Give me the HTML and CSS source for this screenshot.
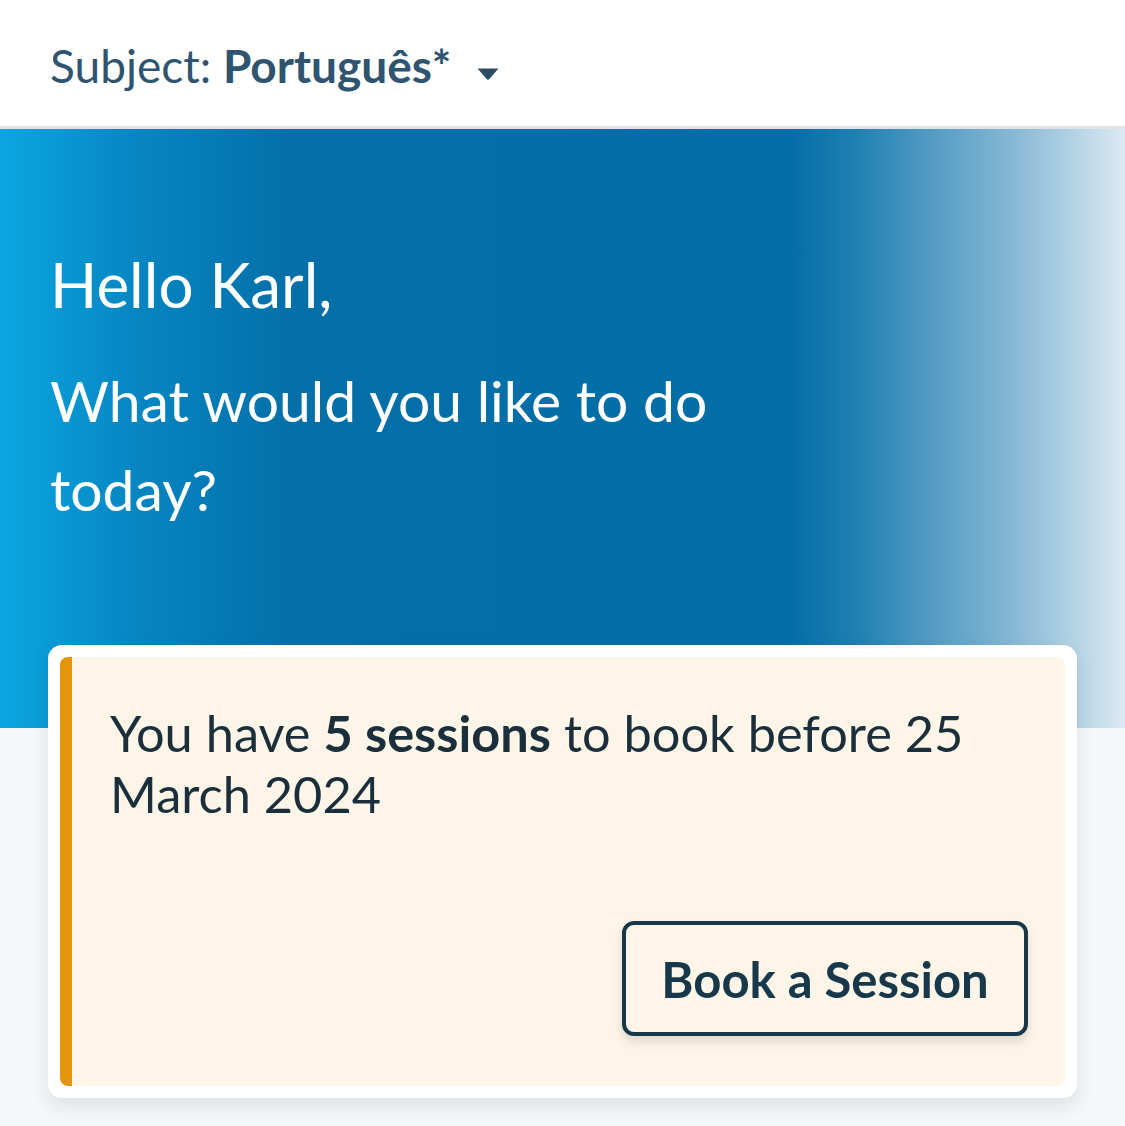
FILE: index.html
```html
<!DOCTYPE html>
<html lang="en">
<head>
<meta charset="utf-8">
<title>Home</title>
<link rel="stylesheet" href="styles.css">
</head>
<body>
<header class="subject-bar">
  <button class="subject-select" type="button">
    <span class="subject-label">Subject: </span><strong class="subject-name">Português*</strong>
    <svg class="caret" width="22" height="14" viewBox="0 0 22 14" aria-hidden="true"><path d="M0.5 1.5 H21.5 L12.6 11.8 Q11 13.6 9.4 11.8 Z" fill="currentColor"/></svg>
  </button>
</header>
<section class="hero">
  <h1 class="hero-greeting">Hello Karl,</h1>
  <p class="hero-question">What would you like to do today?</p>
</section>
<main class="content">
  <div class="card">
    <div class="notice">
      <p class="notice-text">You have <strong>5 sessions</strong> to book before 25 March 2024</p>
      <div class="notice-actions">
        <button class="btn-outline" type="button">Book a Session</button>
      </div>
    </div>
  </div>
</main>
</body>
</html>
```
FILE: styles.css
```css
* { box-sizing: border-box; }
html, body { margin: 0; padding: 0; }
body {
  font-family: "Lato", "Noto Sans", sans-serif;
  background: #f5f7f9;
  color: #1b3445;
  width: 1125px;
  min-height: 1126px;
  overflow: hidden;
}
.subject-bar {
  height: 129px;
  background: #fff;
  border-bottom: 3px solid #e1e4e7;
  padding: 38px 0 0 50px;
  display: flex;
  align-items: flex-start;
}
.subject-select {
  background: none;
  border: 0;
  padding: 0;
  font-family: inherit;
  font-size: 46px;
  line-height: normal;
  color: #2e5470;
  display: flex;
  align-items: center;
  cursor: pointer;
}
.subject-label { font-weight: 400; white-space: pre; }
.subject-name { font-weight: 700; }
.caret { margin-left: 26px; margin-top: 17px; color: #2a4c66; }
.hero {
  height: 599px;
  padding: 120px 50px 0;
  color: #fff;
  background:
    linear-gradient(90deg, #0ba6e2 0%, #0686c2 12%, #046fa8 26%, #036da6 70%, #1f7fb2 76%, #4d98c2 82%, #86b8d5 90%, #dbe9f2 100%);
}
.hero-greeting {
  margin: 0;
  font-size: 62px;
  font-weight: 400;
  line-height: 70px;
}
.hero-question {
  margin: 37px 0 0;
  font-size: 57px;
  line-height: 89px;
  max-width: 720px;
}
.content {
  padding: 0 48px;
  margin-top: -83px;
}
.card {
  background: #fff;
  border-radius: 14px;
  padding: 12px;
  box-shadow: 0 8px 18px rgba(40, 70, 100, 0.12);
}
.notice {
  background: #fdf6e8;
  border-left: 12px solid #e3960d;
  border-radius: 8px;
  min-height: 429px;
  padding: 45px 37px 50px 38px;
  display: flex;
  flex-direction: column;
}
.notice-text {
  margin: 0;
  font-size: 50.5px;
  line-height: 61px;
  color: #1a2e3b;
}
.notice-text strong { font-weight: 700; }
.notice-actions {
  margin-top: auto;
  display: flex;
  justify-content: flex-end;
}
.btn-outline {
  font-family: inherit;
  font-size: 49px;
  font-weight: 700;
  color: #17374b;
  background: #fdf6e8;
  border: 4px solid #17374b;
  border-radius: 12px;
  width: 406px;
  height: 115px;
  padding: 0;
  box-shadow: 0 6px 10px rgba(60, 60, 40, 0.15);
  cursor: pointer;
}
```
